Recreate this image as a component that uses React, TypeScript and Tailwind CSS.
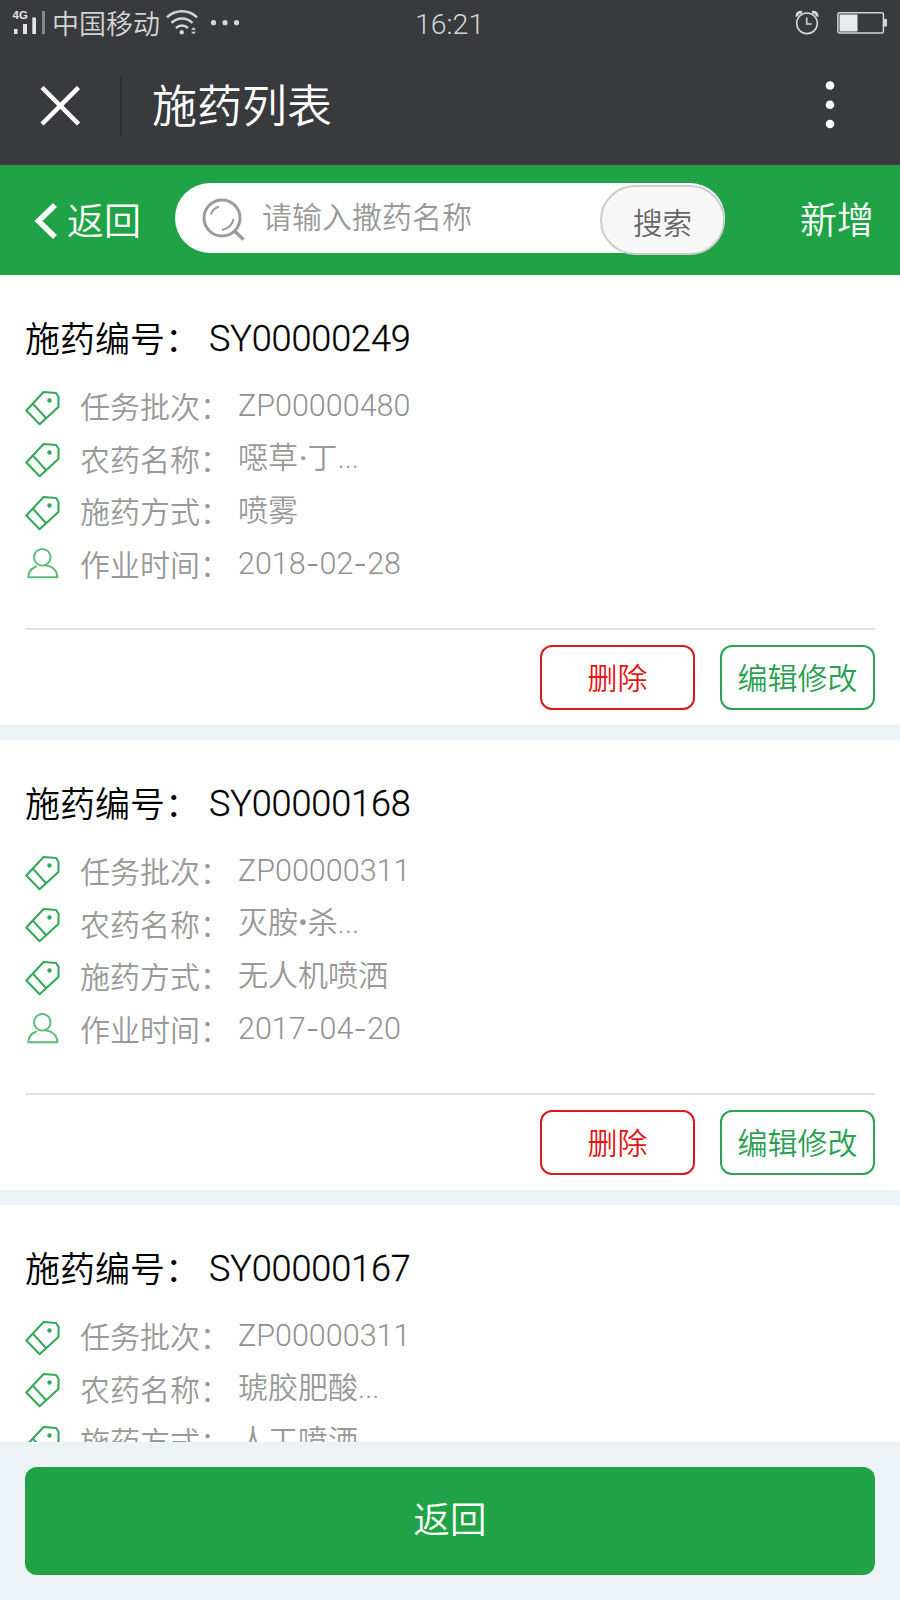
import { Fragment } from 'react';

type Field = { label: string; value: string; icon: 'tag' | 'user'; latin?: boolean };
type Item = { code: string; fields: Field[] };

const makeItem = (code: string, batch: string, name: string, method: string, date: string): Item => ({
  code,
  fields: [
    { label: '任务批次：', value: batch, icon: 'tag', latin: true },
    { label: '农药名称：', value: name, icon: 'tag' },
    { label: '施药方式：', value: method, icon: 'tag' },
    { label: '作业时间：', value: date, icon: 'user', latin: true },
  ],
});

const items: Item[] = [
  makeItem('SY00000249', 'ZP00000480', '噁草·丁...', '喷雾', '2018-02-28'),
  makeItem('SY00000168', 'ZP00000311', '灭胺•杀...', '无人机喷洒', '2017-04-20'),
  makeItem('SY00000167', 'ZP00000311', '琥胶肥酸...', '人工喷洒', '2017-04-20'),
];

function TagIcon() {
  return (
    <svg className="h-[36px] w-[36px]" viewBox="0 0 36 36" fill="none" stroke="#35a95b" strokeWidth="2.1" strokeLinejoin="round">
      <path d="M1.300 20.500 18.600 2l12.500 1 2.500 4-.2 10L14.600 34.200Z" />
      <path d="M7.900 13.600 20.900 28" />
      <circle cx="24.500" cy="10.500" r="2.200" fill="#35a95b" stroke="none" />
    </svg>
  );
}

function UserIcon() {
  return (
    <svg className="h-[36px] w-[36px]" viewBox="0 0 36 36" fill="none" stroke="#5cba7b" strokeWidth="1.9" strokeLinejoin="round" strokeLinecap="round">
      <circle cx="17.300" cy="10.300" r="8.300" />
      <path d="M11.200 19.500C6 21.600 3.300 25.300 3.200 30.300h29.200c0-6.500-4.600-11.300-12-11.700" />
    </svg>
  );
}

/** Renders hyphens, middle dots and ellipses with the advance widths of a proportional face. */
function MixedText({ text }: { text: string }) {
  return (
    <>
      {text.split(/([-·•]|\.\.\.)/).map((part, i) => {
        if (part === '-') return <span key={i} className="font-[Inter]">-</span>;
        if (part === '·') return <span key={i} className="ml-px font-[Roboto] font-medium leading-none">·</span>;
        if (part === '•' || part === '...') return <span key={i} className="font-[Roboto] leading-none">{part}</span>;
        return <Fragment key={i}>{part}</Fragment>;
      })}
    </>
  );
}

function Card({ item }: { item: Item }) {
  return (
    <section className="mb-[15px] h-[450px] shrink-0 bg-white px-[25px] pt-[35px]">
      <div className="flex h-[54px] items-center text-[35px] leading-[54px] text-black">
        <h2 className="w-[184px] shrink-0 whitespace-nowrap">施药编号：</h2>
        <span className="mt-[3px] font-[Roboto] text-[36px] tracking-[-0.1px] [-webkit-text-stroke:0.3px_#000]">{item.code}</span>
      </div>
      <div className="mt-[15px] flex flex-col">
        {item.fields.map((f) => (
          <div key={f.label} className="flex h-[52.5px] items-center text-[30px] leading-[52px] text-[#999]">
            <span className="mt-[5px] w-[55px] shrink-0">{f.icon === 'tag' ? <TagIcon /> : <UserIcon />}</span>
            <span className="w-[158px] shrink-0 whitespace-nowrap">{f.label}</span>
            {f.latin ? (
              <span className="mt-[1px] font-[Roboto] text-[30.5px] text-[#919191]"><MixedText text={f.value} /></span>
            ) : (
              <span className="-mt-[5px] whitespace-pre"><MixedText text={f.value} /></span>
            )}
          </div>
        ))}
      </div>
      <div className="mt-[39px] flex justify-end gap-[25px] border-t-2 border-[#e2e2e2] pt-[15px]">
        <button className="h-[65px] w-[155px] rounded-[12px] border-2 border-[#d91a1a] pb-[4px] text-[30px] leading-[56px] text-[#e01515]">删除</button>
        <button className="h-[65px] w-[155px] rounded-[12px] border-2 border-[#2fa057] pb-[4px] text-[30px] leading-[56px] text-[#2a9f52]">编辑修改</button>
      </div>
    </section>
  );
}

function StatusBar() {
  return (
    <div className="flex h-[46px] items-center text-[#d3d5d6]">
      <svg className="ml-[12px] h-[46px] w-[36px]" viewBox="0 0 36 46" fill="#e2e4e5">
        <text x="0.500" y="19" fontFamily="Liberation Sans" fontWeight="700" fontSize="11.500">4G</text>
        <path d="M2 29h3.500v5H2zM11 24h4v10h-4zM20.300 17.500h3.700V34h-3.700z" />
        <path d="M30 11h3v23h-3z" fill="#85888a" />
      </svg>
      <span className="ml-[4px] w-[109px] text-[27px] leading-[42px]">中国移动</span>
      <svg className="ml-[5px] h-[46px] w-[76px]" viewBox="0 0 76 46" fill="none" stroke="#d3d5d6" strokeWidth="2.500">
        <path d="M1 17.300c8.500-8 21.500-8 30 0M5.500 22.800c6-5.800 15-5.800 21 0M10 28c3.500-3.300 8.500-3.300 12 0" />
        <circle cx="15.700" cy="32.300" r="2.200" fill="#d3d5d6" stroke="none" />
        <path d="m25 29.800 2.500-2.500 2.500 2.500ZM25 31.800l2.500 2.500 2.500-2.500Z" fill="#d3d5d6" stroke="none" />
        <g fill="#d3d5d6" stroke="none">
          <circle cx="47.500" cy="22.700" r="2.600" />
          <circle cx="59" cy="22.700" r="2.600" />
          <circle cx="70.500" cy="22.700" r="2.600" />
        </g>
      </svg>
      <span className="ml-[173px] w-[70px] whitespace-nowrap pt-[3px] font-[Roboto] text-[28.500px] leading-[40px]">16:21</span>
      <svg className="ml-auto h-[46px] w-[26px]" viewBox="0 0 26 46" fill="none" stroke="#d3d5d6" strokeWidth="1.600">
        <circle cx="13" cy="23.300" r="10.300" />
        <path d="M12.700 17.500v6.500h5" />
        <path d="M3 16.500c-.800-2.500 1.500-4.800 5-4M23 16.500c.800-2.500-1.500-4.800-5-4" strokeWidth="3" />
      </svg>
      <svg className="ml-[17px] mr-[12px] h-[46px] w-[51px]" viewBox="0 0 51 46" fill="none">
        <rect x="0.900" y="12.700" width="45.500" height="20.300" rx="1.500" stroke="#d3d5d6" strokeWidth="1.500" />
        <path d="M2.500 14.500H20.500v17H2.500z" fill="#e9eaeb" />
        <path d="M47 19h3v7.500h-3z" fill="#d3d5d6" />
      </svg>
    </div>
  );
}

export default function App() {
  return (
    <div lang="zh-CN" className="flex h-[1600px] w-[900px] flex-col overflow-hidden bg-[#ecf3f6] font-['Noto_Sans_CJK_SC',sans-serif] font-[350]">
      <header className="h-[165px] shrink-0 bg-[#383a3d]">
        <StatusBar />
        <div className="flex h-[119px] items-center text-white">
          <svg className="ml-[40px] h-[40px] w-[40px]" viewBox="0 0 40 40" fill="none" stroke="#fff" strokeWidth="4.500">
            <path d="m2 1.500 36.500 36.500M38.500 1.500 2 38" />
          </svg>
          <span className="ml-[40px] h-[60px] w-[2px] bg-[#2e3032]" />
          <h1 className="-mt-[3px] ml-[30px] text-[45px] leading-[64px]">施药列表</h1>
          <svg className="-mt-px ml-auto mr-[60px] h-[50px] w-[20px]" viewBox="0 0 20 50" fill="#fff">
            <circle cx="10" cy="5.500" r="4.300" />
            <circle cx="10" cy="24.700" r="4.300" />
            <circle cx="10" cy="44" r="4.300" />
          </svg>
        </div>
      </header>
      <nav className="flex h-[110px] shrink-0 items-start bg-[#20a346] text-white">
        <div className="flex w-[175px] items-center pl-[34px] pt-[29px]">
          <svg className="mt-[3px] h-[38px] w-[24px]" viewBox="0 0 24 38" fill="none" stroke="#fff" strokeWidth="5.500">
            <path d="M21 3 4.500 19 21 35" />
          </svg>
          <span className="ml-[9px] text-[37px] leading-[50px]">返回</span>
        </div>
        <div className="mt-[18px] flex h-[70px] w-[550px] items-start rounded-full bg-white pl-[27px]">
          <svg className="mt-[15px] h-[44px] w-[44px]" viewBox="0 0 44 44" fill="none" stroke="#9b9b9b" strokeWidth="3">
            <circle cx="20" cy="20" r="18" />
            <path d="m32.500 33 9 8.500" strokeWidth="3.500" />
            <path d="M8.800 16.500c1.500-4 4-6.500 8-8M31.500 21c-1 5.500-5 9.500-11.500 11" strokeWidth="2" />
          </svg>
          <span className="ml-[16px] mt-[9px] w-[338px] text-[30px] leading-[46px] text-[#999]">请输入撒药名称</span>
          <button className="mt-[2px] h-[70px] w-[125px] shrink-0 rounded-full border-2 border-[#cfcbcc] bg-[#f7f7f7] pt-px text-[29.500px] leading-[60px] text-[#666]">搜索</button>
        </div>
        <span className="ml-[75px] pt-[28px] text-[37px] leading-[50px]">新增</span>
      </nav>
      <main className="flex h-[1167px] shrink-0 flex-col overflow-hidden">
        {items.map((item) => (
          <Card key={item.code} item={item} />
        ))}
      </main>
      <footer className="h-[158px] shrink-0 bg-[#ecf2f6] px-[25px] pt-[25px]">
        <button className="h-[108px] w-full rounded-[12px] bg-[#20a346] pb-[6px] text-[36.500px] text-white">返回</button>
      </footer>
    </div>
  );
}
